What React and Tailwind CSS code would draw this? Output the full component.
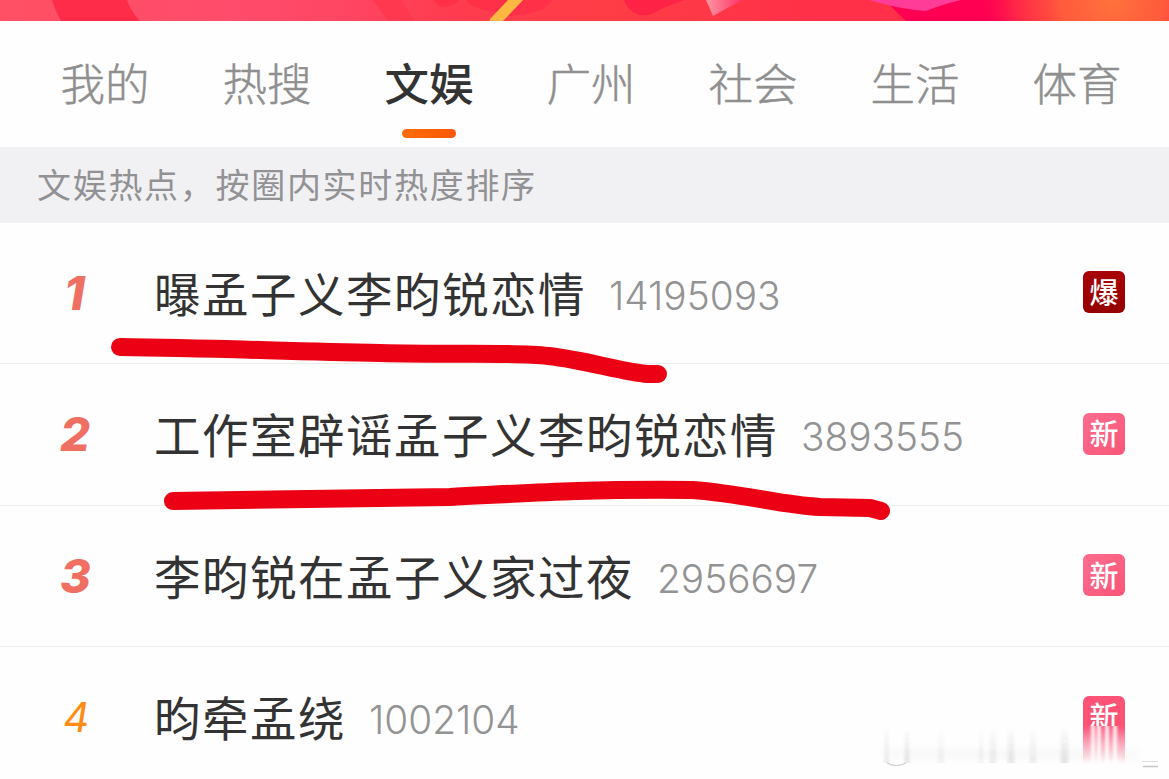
const tabs = ["我的", "热搜", "文娱", "广州", "社会", "生活", "体育"];

const topics = [
  { title: "曝孟子义李昀锐恋情", heat: "14195093", tag: "爆" },
  { title: "工作室辟谣孟子义李昀锐恋情", heat: "3893555", tag: "新" },
  { title: "李昀锐在孟子义家过夜", heat: "2956697", tag: "新" },
  { title: "昀牵孟绕", heat: "1002104", tag: "新" },
];

function Banner() {
  return (
    <svg className="block h-[21px] w-full shrink-0" viewBox="0 0 1169 21" preserveAspectRatio="none">
      <defs>
        <linearGradient id="sky" x1="0" x2="1" y1="0" y2="0">
          <stop offset="0" stopColor="#ff5064" />
          <stop offset="0.2" stopColor="#ff4c6c" />
          <stop offset="0.3" stopColor="#ff4562" />
          <stop offset="0.38" stopColor="#ff3c50" />
          <stop offset="0.52" stopColor="#ff3d46" />
          <stop offset="0.7" stopColor="#ff3048" />
        </linearGradient>
        <radialGradient id="glow" gradientUnits="userSpaceOnUse" cx="1112" cy="0" r="130">
          <stop offset="0" stopColor="#ff723c" />
          <stop offset="0.4" stopColor="#ff5a3c" />
          <stop offset="0.75" stopColor="#ff3045" stopOpacity="0.8" />
          <stop offset="1" stopColor="#ff1048" stopOpacity="0" />
        </radialGradient>
        <linearGradient id="gem" x1="0" x2="1" y1="0" y2="0">
          <stop offset="0" stopColor="#ff98a0" />
          <stop offset="1" stopColor="#ff3068" />
        </linearGradient>
      </defs>
      <rect width="1169" height="21" fill="url(#sky)" />
      <path d="M52 0H127Q131 12 140 21H61Q55 10 52 0Z" fill="#ff2c49" />
      <path d="M372 0H402L414 21H389Z" fill="#ff384f" />
      <path d="M433 0Q444 14 460 0ZM465 0Q475 11 500 12L510 0ZM522 0L508 16Q545 14 552 0Z" fill="#ff3048" />
      <path d="M508 0H523L503 21H490Q489 19 492 17Z" fill="#ffb842" />
      <path d="M624 0H684L661 9Q645 20 633 12Q626 7 624 0Z" fill="#ff2247" />
      <path d="M706 0H742L713 16Z" fill="url(#gem)" />
      <path d="M880 0H1169V21H906Q896 12 889 4Z" fill="#ff0053" />
      <path d="M869 0H961Q940 5 926 11Q898 9 869 0Z" fill="#ff3d98" />
      <rect x="932" width="237" height="21" fill="url(#glow)" />
    </svg>
  );
}

function Tabs() {
  return (
    <nav className="flex h-[126px] shrink-0 pl-6">
      {tabs.map((tab) => {
        const active = tab === "文娱";
        return (
          <div key={tab} className="flex w-[162px] shrink-0 flex-col items-center pt-[29px]">
            <span
              className={
                active
                  ? "text-[44.5px] leading-[64px] font-medium text-[#333]"
                  : "text-[44.5px] leading-[64px] font-light text-[#8f8f8f] [-webkit-text-stroke:0.5px_#8f8f8f]"
              }
            >
              {tab}
            </span>
            {active && (
              <span className="mt-[15px] h-[9px] w-[54px] rounded-full bg-linear-to-r from-[#ff6c0c] to-[#f95800]" />
            )}
          </div>
        );
      })}
    </nav>
  );
}

function Tag({ text, faded }) {
  return (
    <span
      className={
        text === "爆"
          ? "flex size-[42px] items-center justify-center rounded-[6px] bg-linear-to-b from-[#a80306] to-[#950000] pb-[2px] text-[29px] leading-none font-medium text-white"
          : faded
            ? "flex size-[42px] items-center justify-center rounded-t-[6px] bg-[#fb5276] pb-[2px] text-[29px] leading-none font-medium text-white"
            : "flex size-[42px] items-center justify-center rounded-[6px] bg-linear-to-br from-[#fb6d8d] to-[#fa5579] pb-[2px] text-[29px] leading-none font-medium text-white"
      }
    >
      {text}
    </span>
  );
}

function Topic({ rank, topic }) {
  return (
    <li className="flex h-[141.5px] shrink-0 items-center border-b border-[#ececec] pr-11 pl-[50px]">
      <span
        className={
          rank === 1
            ? "w-[104px] pb-px pl-[14px] font-['Inter'] text-[47px] leading-none font-extrabold text-[#ef7063] italic"
            : rank < 4
              ? "w-[104px] pb-px pl-[10px] font-['Inter'] text-[47px] leading-none font-extrabold text-[#ef7063] italic"
              : "w-[104px] pt-px pl-[13px] font-['Inter'] text-[41px] leading-none font-normal text-[#ff8c12] italic"
        }
      >
        {rank}
      </span>
      <span className="pb-[2px] text-[46.5px] leading-none tracking-[1.5px] text-[#333]">{topic.title}</span>
      <span className="mt-[7px] ml-[23px] font-['Inter'] text-[38.8px] leading-none font-light text-[#939393]">
        {topic.heat}
      </span>
      <span className="ml-auto pb-px">
        <Tag text={topic.tag} faded={rank === 4} />
      </span>
    </li>
  );
}

// hand drawn marker lines under the first two topics
function Marker() {
  return (
    <svg
      className="pointer-events-none absolute top-0 left-0 h-[779px] w-[1169px]"
      viewBox="0 0 1169 779"
      fill="none"
      stroke="#eb0014"
      strokeWidth="18"
      strokeLinecap="round"
      strokeLinejoin="round"
    >
      <path d="M120 347C210 348 280 351 380 353C460 355 515 352 548 356C586 360 622 372 648 374H658" />
      <path d="M173 501C270 499 365 499 450 497C530 493 580 489 692 490C746 494 780 505 820 507L870 508L881 511" />
    </svg>
  );
}

// the lower right corner is wiped out into pale vertical streaks
const streaks = [
  [885, 3, 0.13], [905, 4, 0.14], [938, 6, 0.05], [979, 4, 0.06], [990, 6, 0.09],
  [1008, 6, 0.12], [1030, 6, 0.07], [1061, 7, 0.13],
];

function Smudge() {
  return (
    <svg className="pointer-events-none absolute top-[726px] left-[876px] h-[53px] w-[293px]" viewBox="876 726 293 53">
      <defs>
        <linearGradient id="wipe" x1="0" x2="0" y1="0" y2="1">
          <stop offset="0" stopColor="#fa5276" />
          <stop offset="0.45" stopColor="#fca4b8" />
          <stop offset="1" stopColor="#fefefe" />
        </linearGradient>
        <linearGradient id="streak" x1="0" x2="0" y1="0" y2="1">
          <stop offset="0" stopColor="#333" stopOpacity="0" />
          <stop offset="1" stopColor="#333" />
        </linearGradient>
        <filter id="soft" x="-10%" width="120%">
          <feGaussianBlur stdDeviation="1.5 0.5" />
        </filter>
        <filter id="haze" x="-10%" width="120%" y="-100%" height="300%">
          <feGaussianBlur stdDeviation="4" />
        </filter>
      </defs>
      <rect x="876" y="726" width="293" height="53" fill="#fefefe" />
      <rect x="1083" y="726" width="42" height="38" fill="url(#wipe)" />
      <rect x="884" y="750" width="254" height="8" fill="#888" opacity="0.05" filter="url(#haze)" />
      <g filter="url(#soft)">
        <path d="M1093 726V763M1099 726V763M1107 726V763M1115 726V763" stroke="#fff" strokeWidth="3.5" />
        {streaks.map(([x, w, opacity]) => (
          <rect key={x} x={x} y="727" width={w} height="36" fill="url(#streak)" opacity={opacity} />
        ))}
      </g>
      <path d="M887 763Q896 768 906 763" stroke="#c4c4c4" fill="none" />
      <path d="M1142 761.5H1158" stroke="#dedede" />
      <path d="M1143 766.5H1158" stroke="#c4c4c4" strokeWidth="1.5" />
    </svg>
  );
}

export default function App() {
  return (
    <div className="relative flex h-[779px] w-[1169px] flex-col overflow-hidden bg-[#fefefe] font-['Noto_Sans_CJK_SC','Noto_Sans_CJK_TC',sans-serif]">
      <Banner />
      <Tabs />
      <div className="flex h-[75.5px] shrink-0 items-center bg-[#f1f1f4] pb-px pl-[37px] text-[34px] leading-none tracking-[1.7px] text-[#929294]">
        文娱热点，按圈内实时热度排序
      </div>
      <ul className="flex flex-col">
        {topics.map((topic, i) => (
          <Topic key={topic.title} rank={i + 1} topic={topic} />
        ))}
      </ul>
      <Marker />
      <Smudge />
    </div>
  );
}
